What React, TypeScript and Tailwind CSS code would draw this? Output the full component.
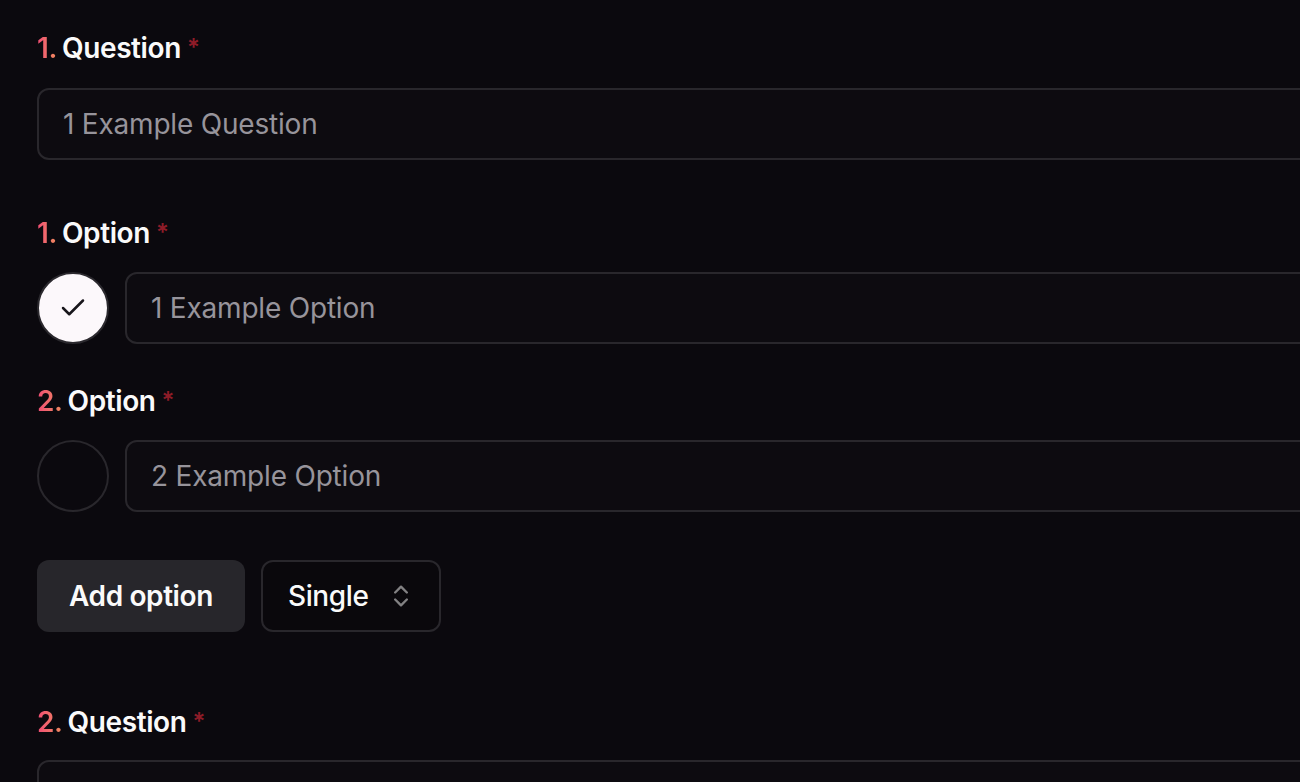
import React from 'react';
import { Check, ChevronsUpDown } from 'lucide-react';

function Label({ n, text }: { n: number; text: string }) {
  return (
    <div className="flex items-start h-[40px] leading-[40px] text-[28px] font-semibold tracking-[-0.4px] text-[#fafafa]">
      <span className="bg-gradient-to-r from-[#f04a74] to-[#f08a5d] bg-clip-text text-transparent">{n}.</span>
      <span className="ml-[5px]">{text}</span>
      <span className="ml-[6px] mt-[5px] text-[24px] leading-[30px] text-[#8e1c28]">*</span>
    </div>
  );
}

function Field({ placeholder }: { placeholder: string }) {
  return (
    <div className="flex-1 h-[72px] flex items-center rounded-[12px] border-2 border-[#29272c] bg-[#0d0b10] pl-[24px] text-[28px] tracking-[-0.2px] text-[#97949b]">
      {placeholder}
    </div>
  );
}

function OptionRow({ n, checked }: { n: number; checked: boolean }) {
  return (
    <div className="flex flex-col gap-[19px]">
      <Label n={n} text="Option" />
      <div className="flex items-center gap-[16px]">
        {checked ? (
          <div className="w-[72px] h-[72px] shrink-0 rounded-full bg-[#fcf8fb] border-2 border-[#2b292e] flex items-center justify-center text-[#18161b]">
            <Check size={30} strokeWidth={2} />
          </div>
        ) : (
          <div className="w-[72px] h-[72px] shrink-0 rounded-full border-2 border-[#29272c]" />
        )}
        <Field placeholder={`${n} Example Option`} />
      </div>
    </div>
  );
}

export default function App() {
  return (
    <div className="w-screen h-screen overflow-hidden bg-[#0b090e]" style={{ fontFamily: 'Inter, "Noto Sans", sans-serif' }}>
      <div className="w-[1500px] pl-[37px] pt-[28px]">
        <div className="flex flex-col gap-[20px]">
          <Label n={1} text="Question" />
          <div className="flex">
            <Field placeholder="1 Example Question" />
          </div>
        </div>

        <div className="mt-[53px]">
          <OptionRow n={1} checked />
        </div>
        <div className="mt-[37px]">
          <OptionRow n={2} checked={false} />
        </div>

        <div className="mt-[48px] flex gap-[16px]">
          <button className="h-[72px] w-[208px] rounded-[12px] bg-[#27262b] text-[28px] font-semibold tracking-[-0.4px] text-[#fafafa]">
            Add option
          </button>
          <button className="h-[72px] w-[180px] pl-[25px] rounded-[12px] border-2 border-[#29272c] bg-[#0a080c] flex items-center text-[28px] font-medium tracking-[-0.4px] text-[#fafafa]">
            Single
            <ChevronsUpDown size={28} strokeWidth={2} className="ml-[19px] opacity-50" />
          </button>
        </div>

        <div className="mt-[70px] flex flex-col gap-[18px]">
          <Label n={2} text="Question" />
          <div className="flex">
            <Field placeholder="2 Example Question" />
          </div>
        </div>
      </div>
    </div>
  );
}
